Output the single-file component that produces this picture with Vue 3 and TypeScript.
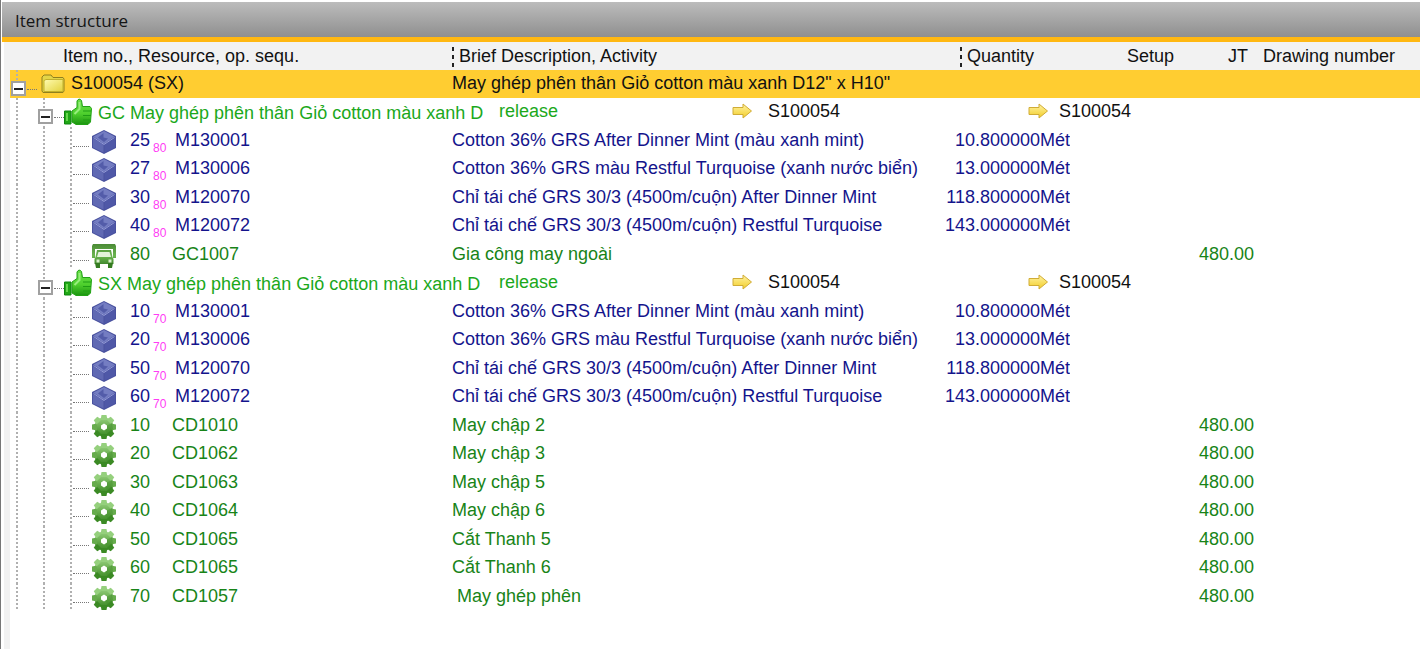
<script setup lang="ts">
interface Row {
  kind: 'root' | 'group' | 'part' | 'truck' | 'op'
  no: string
  sub?: string
  item?: string
  text: string
  qty?: string
  jt?: string
}

const materials = (sub: string, numbers: string[]): Row[] => [
  { kind: 'part', no: numbers[0], sub, item: 'M130001', text: 'Cotton 36% GRS After Dinner Mint (màu xanh mint)', qty: '10.800000Mét' },
  { kind: 'part', no: numbers[1], sub, item: 'M130006', text: 'Cotton 36% GRS màu Restful Turquoise (xanh nước biển)', qty: '13.000000Mét' },
  { kind: 'part', no: numbers[2], sub, item: 'M120070', text: 'Chỉ tái chế GRS 30/3 (4500m/cuộn) After Dinner Mint', qty: '118.800000Mét' },
  { kind: 'part', no: numbers[3], sub, item: 'M120072', text: 'Chỉ tái chế GRS 30/3 (4500m/cuộn) Restful Turquoise', qty: '143.000000Mét' },
]

const op = (no: string, item: string, text: string): Row => ({ kind: 'op', no, item, text, jt: '480.00' })

const rows: Row[] = [
  { kind: 'root', no: 'S100054 (SX)', text: 'May ghép phên thân Giỏ cotton màu xanh D12" x H10"' },
  { kind: 'group', no: 'GC May ghép phên thân Giỏ cotton màu xanh D', text: 'release', item: 'S100054' },
  ...materials('80', ['25', '27', '30', '40']),
  { kind: 'truck', no: '80', item: 'GC1007', text: 'Gia công may ngoài', jt: '480.00' },
  { kind: 'group', no: 'SX May ghép phên thân Giỏ cotton màu xanh D', text: 'release', item: 'S100054' },
  ...materials('70', ['10', '20', '50', '60']),
  op('10', 'CD1010', 'May chập 2'),
  op('20', 'CD1062', 'May chập 3'),
  op('30', 'CD1063', 'May chập 5'),
  op('40', 'CD1064', 'May chập 6'),
  op('50', 'CD1065', 'Cắt Thanh 5'),
  op('60', 'CD1065', 'Cắt Thanh 6'),
  op('70', 'CD1057', '\u00a0May ghép phên'),
]

const refs = [
  { name: 'from', span: 2 },
  { name: 'to', span: 4 },
]

const teeth = [0, 45, 90, 135, 180, 225, 270, 315]
</script>

<template>
  <main class="window">
    <svg class="defs" aria-hidden="true">
      <defs>
        <linearGradient id="gFolder" x1="0" y1="0" x2="1" y2="1">
          <stop offset="0" stop-color="#fffbb0" /><stop offset="1" stop-color="#e2d23c" />
        </linearGradient>
        <linearGradient id="gThumb" gradientUnits="userSpaceOnUse" x1="0" y1="0" x2="0" y2="28">
          <stop offset="0" stop-color="#6be04c" /><stop offset="0.55" stop-color="#4fd02e" /><stop offset="1" stop-color="#138c0b" />
        </linearGradient>
        <linearGradient id="gGear" gradientUnits="userSpaceOnUse" x1="0" y1="0" x2="0" y2="24">
          <stop offset="0" stop-color="#a2d98b" /><stop offset="0.5" stop-color="#67ac4d" /><stop offset="1" stop-color="#2f7f19" />
        </linearGradient>
        <linearGradient id="gTruck" gradientUnits="userSpaceOnUse" x1="0" y1="0" x2="0" y2="24">
          <stop offset="0" stop-color="#4a8a35" /><stop offset="0.5" stop-color="#6cb651" /><stop offset="1" stop-color="#2e731c" />
        </linearGradient>
        <linearGradient id="gArrow" x1="0" y1="0" x2="0" y2="1">
          <stop offset="0" stop-color="#fff3a4" /><stop offset="1" stop-color="#f2cd28" />
        </linearGradient>
      </defs>
    </svg>
    <h1 class="title">Item structure</h1>
    <div class="body">
      <table class="tree">
        <colgroup>
          <col class="w-item" /><col class="w-clip" /><col class="w-state" /><col class="w-from" />
          <col class="w-qty" /><col class="w-unit" /><col class="w-setup" /><col class="w-jt" /><col />
        </colgroup>
        <thead>
          <tr>
            <th class="h-item">Item no., Resource, op. sequ.</th>
            <th colspan="3"><span class="split">Brief Description, Activity</span></th>
            <th colspan="2"><span class="split inset">Quantity</span></th>
            <th class="right">Setup</th>
            <th class="right h-jt">JT</th>
            <th class="h-draw">Drawing number</th>
          </tr>
        </thead>
        <tbody>
          <tr v-for="(row, i) in rows" :key="i" :class="row.kind">
            <td :colspan="row.kind === 'group' ? 2 : 1">
              <div class="node">
                <template v-if="row.kind === 'root'">
                  <span class="guide half branch"><button type="button" class="toggle" aria-label="Collapse"></button></span>
                  <svg class="ico folder" viewBox="0 0 24 24">
                    <path d="M1 19V5L3 3h7l2 2.500h10L23 7v12l-1 1.500H2z" fill="#e4d547" stroke="#8f801e" />
                    <path d="M3 19.500V8.500L5 7.500h17v12z" fill="url(#gFolder)" stroke="#c2b02a" />
                  </svg>
                  <span>{{ row.no }}</span>
                </template>
                <template v-else-if="row.kind === 'group'">
                  <span class="guide"></span>
                  <span class="guide branch"><button type="button" class="toggle" aria-label="Collapse"></button></span>
                  <svg class="ico thumb" viewBox="0 0 28 28">
                    <path d="M8 13 13 9.500 13 3Q15-.5 17.500 2.500L18.500 8.500H26L27.500 10.500 26.500 24 24 26.500H12L8 24z" fill="url(#gThumb)" stroke="#22a215" />
                    <path d="M19 13h8M19 17.500h8M19 22h7" stroke="#1f9d15" />
                    <path d="M0.500 13h6.500v13H0.500z" fill="#20a716" stroke="#0d850c" />
                    <path d="M3 15v8" stroke="#67d64e" stroke-width="2" />
                    <path d="M15.500 4v7l-5 5" fill="none" stroke="#96ee7c" stroke-width="2" />
                  </svg>
                  <span class="label">{{ row.no }}</span>
                </template>
                <template v-else>
                  <span class="guide"></span>
                  <span class="guide"></span>
                  <span class="guide leaf"></span>
                  <svg v-if="row.kind === 'part'" class="ico" viewBox="0 0 24 24">
                    <path d="M12 0 24 6V18L12 24 0 18V6z" fill="#4a529f" />
                    <path d="M12 1 22.500 6.500 12 14 1.500 6.500z" fill="#747dc2" />
                    <path d="M1 8 11.500 14.500V22.500L1 17.500z" fill="#6069b3" />
                    <path d="M12.500 14.500 23 8V17.500L12.500 22.500z" fill="#4f58a7" />
                    <path d="M11.500 3v4.500l4.500 1-4 3.500-6-4.500z" fill="#535ca9" />
                    <path d="M1.500 7.500 12 14.500l10.500-7" fill="none" stroke="#9098d4" />
                  </svg>
                  <svg v-else-if="row.kind === 'truck'" class="ico" viewBox="0 0 24 24">
                    <path d="M1 0h22l1 2v12h-3V5H3v9H0V2z" fill="url(#gTruck)" />
                    <path d="M5 6h14l1.500 7 1 2v5h-19v-5l1-2z" fill="url(#gTruck)" />
                    <path d="M6.500 8h11l1.500 5H5z" fill="#e3f2db" />
                    <path d="M3 19h5v5H4zM16 19h5l-1 5h-4z" fill="#347b20" />
                    <path d="M4.500 15.500h3v3h-3zM16.500 15.500h3v3h-3z" fill="#d8efcc" />
                  </svg>
                  <svg v-else class="ico" viewBox="0 0 24 24">
                    <g fill="url(#gGear)">
                      <circle cx="12" cy="12" r="9.500" />
                    </g>
                    <g v-for="a in teeth" :key="a" :transform="`rotate(${a} 12 12)`">
                      <path d="M8.500 5 9.500 0h5l1 5z" :fill="a > 90 && a < 270 ? '#3b8a24' : a === 90 || a === 270 ? '#67ac4d' : '#95d07d'" />
                    </g>
                    <path d="M12 12 20 8 21 14 16 20z" fill="#3f8b29" opacity="0.4" />
                    <path d="M12 8.500 15 10.500v3L12 15.500 9 13.500v-3z" fill="#fff" />
                  </svg>
                  <span class="seq">{{ row.no }}<sub v-if="row.sub">{{ row.sub }}</sub></span>
                  <span>{{ row.item }}</span>
                </template>
              </div>
            </td>
            <template v-if="row.kind === 'group'">
              <td class="state">{{ row.text }}</td>
              <td v-for="target in refs" :key="target.name" :colspan="target.span">
                <div class="ref" :class="target.name">
                  <svg class="arrow" viewBox="0 0 20 16">
                    <path d="M1 4.500h10V1l8.500 7-8.500 7v-3.500H1z" fill="url(#gArrow)" stroke="#d0ac36" stroke-linejoin="round" />
                  </svg>
                  <span>{{ row.item }}</span>
                </div>
              </td>
            </template>
            <template v-else>
              <td colspan="3">{{ row.text }}</td>
              <td colspan="2" class="right">{{ row.qty }}</td>
              <td></td>
              <td class="right">{{ row.jt }}</td>
              <td></td>
            </template>
          </tr>
        </tbody>
      </table>
    </div>
  </main>
</template>

<style>
body {
  margin: 0;
  background: #fff;
}
</style>

<style scoped>
.window {
  box-sizing: border-box;
  min-height: 100vh;
  padding-top: 2px;
  border-left: 1px solid #777;
  background: #fff;
  font: 18px/26px "Liberation Sans", Arial, sans-serif;
  color: #111;
}
.defs {
  position: absolute;
  width: 0;
  height: 0;
}
.title {
  height: 35px;
  margin: 0 0 0 1px;
  padding-left: 13px;
  border-bottom: 5px solid #ffb812;
  background: linear-gradient(#bcbcbc, #8f8f8f);
  font: 17px/38px "Open Sans", "Noto Sans", sans-serif;
  color: #151515;
}
.body {
  min-height: calc(100vh - 42px);
  margin-left: 3px;
  box-sizing: border-box;
  border-left: 6px solid #f2f2f2;
}
.tree {
  width: 100%;
  table-layout: fixed;
  border-collapse: collapse;
}
.w-item { width: 442px; }
.w-clip { width: 32px; }
.w-state { width: 248px; }
.w-from { width: 208px; }
.w-qty { width: 88px; }
.w-unit { width: 42px; }
.w-setup { width: 104px; }
.w-jt { width: 80px; }
th,
td {
  height: 28px;
  padding: 0;
  text-align: left;
  vertical-align: top;
  font-weight: normal;
  white-space: nowrap;
}
tbody tr:nth-child(even) td {
  height: 29px;
}
th {
  background: #f2f2f2;
  line-height: 28px;
  padding-top: 1px;
  height: 27px;
  line-height: 27px;
}
.h-item { padding-left: 53px; }
.h-jt { padding-right: 6px; }
.h-draw { padding-left: 9px; }
.right { text-align: right; }
.split {
  display: block;
  padding-left: 7px;
  background: repeating-linear-gradient(#222 0 4px, transparent 4px 8px) 0 4px / 2px 20px no-repeat;
}
.inset { margin-left: 20px; }
.root td { background: #ffcd31; }
.group { color: #1ba81b; }
.part { color: #14148c; }
.truck,
.op { color: #188418; }
td { overflow: hidden; }
.node {
  display: flex;
  align-items: flex-start;
  height: 100%;
}
.guide {
  position: relative;
  display: flex;
  align-items: flex-start;
  align-self: stretch;
  flex: none;
  width: 27px;
  min-height: 28px;
  background: repeating-linear-gradient(#b0b0b0 0 2px, transparent 2px 4px) 6px 0 / 2px 100% no-repeat;
}
.half { background-size: 2px 50%; }
.leaf::after,
.branch::after {
  content: "";
  position: absolute;
  left: 9px;
  right: 2px;
  top: 19px;
  border-top: 1px dotted #777;
}
.branch::after {
  left: 17px;
  right: 0;
}
.toggle {
  box-sizing: border-box;
  width: 15px;
  height: 15px;
  margin: 11px 0 0 1px;
  padding: 0;
  border: 2px solid #a0a0a0;
  background: linear-gradient(#222, #222) center / 9px 2px no-repeat #fff;
}
.ico {
  flex: none;
  width: 24px;
  height: 24px;
  margin: 3px 14px 0 1px;
}
.folder { margin: 2px 6px 0 4px; }
.thumb {
  width: 28px;
  height: 28px;
  margin: 0 6px 0 0;
}
.label { padding-top: 2px; }
.seq {
  display: flex;
  width: 42px;
}
.part .seq { width: 45px; }
sub {
  padding: 15px 0 0 3px;
  font-size: 12px;
  line-height: 13px;
  color: #ff3cf5;
}
.state { padding-left: 15px; }
.ref {
  display: flex;
  align-items: center;
  gap: 16px;
  color: #111;
}
.to { gap: 11px; }
.arrow {
  width: 20px;
  height: 16px;
}
</style>
